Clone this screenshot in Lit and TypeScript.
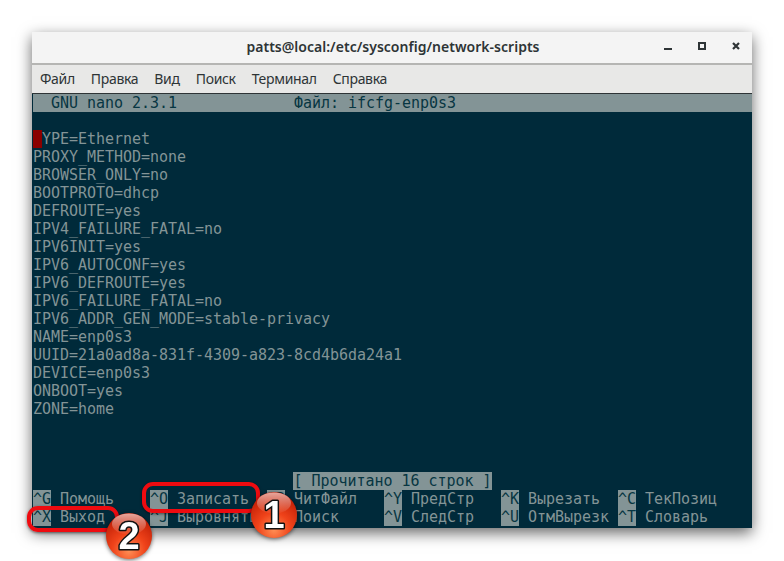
import { LitElement, html, css, svg } from "lit";
import { customElement } from "lit/decorators.js";

const LINES = [
  "PROXY_METHOD=none",
  "BROWSER_ONLY=no",
  "BOOTPROTO=dhcp",
  "DEFROUTE=yes",
  "IPV4_FAILURE_FATAL=no",
  "IPV6INIT=yes",
  "IPV6_AUTOCONF=yes",
  "IPV6_DEFROUTE=yes",
  "IPV6_FAILURE_FATAL=no",
  "IPV6_ADDR_GEN_MODE=stable-privacy",
  "NAME=enp0s3",
  "UUID=21a0ad8a-831f-4309-a823-8cd4b6da24a1",
  "DEVICE=enp0s3",
  "ONBOOT=yes",
  "ZONE=home",
];

const ROW1 = [["^G", "Помощь"], ["^O", "Записать"], ["^R", "ЧитФайл"], ["^Y", "ПредСтр"], ["^K", "Вырезать"], ["^C", "ТекПозиц"]];
const ROW2 = [["^X", "Выход"], ["^J", "Выровнять"], ["^W", "Поиск"], ["^V", "СледСтр"], ["^U", "ОтмВырезк"], ["^T", "Словарь"]];

function badge(id: string, left: number, top: number, digit: string) {
  return html`<svg class="badge" style="left:${left}px;top:${top}px" width="50" height="50" viewBox="0 0 50 50">
    <defs>
      <radialGradient id=${id} cx="50%" cy="82%" r="72%">
        <stop offset="0" stop-color="#ff8f55"></stop>
        <stop offset="0.5" stop-color="#f0431a"></stop>
        <stop offset="1" stop-color="#c42208"></stop>
      </radialGradient>
      <linearGradient id="${id}g" x1="0" y1="0" x2="0" y2="1">
        <stop offset="0" stop-color="#fff" stop-opacity=".6"></stop>
        <stop offset="1" stop-color="#fff" stop-opacity=".03"></stop>
      </linearGradient>
    </defs>
    <circle cx="25" cy="26" r="23" fill=${`url(#${id})`}></circle>
    <ellipse cx="25" cy="14" rx="17" ry="10.5" fill=${`url(#${id}g)`}></ellipse>
    <text x="25" y="38.5" class="digit">${digit}</text>
  </svg>`;
}

@customElement("app-root")
export class AppRoot extends LitElement {
  static styles = css`
    :host { display: block; height: 561px; background: #fff; overflow: hidden; position: relative; }
    .page { padding: 32px 32px 0; }
    .win { width: 720px; height: 496px; display: flex; flex-direction: column; box-shadow: 0 5px 14px rgba(0,0,0,.6); }
    .title { height: 29px; padding: 0 0 2px 2px; background: #f4f4f4; border-bottom: 2px solid #b5b5b3; display: flex; align-items: center; justify-content: center; position: relative;
      font: 600 14px "Noto Sans", "Open Sans", sans-serif; letter-spacing: 0.02px; color: #2e3436; }
    .ctrls { position: absolute; right: 0; top: 0; }
    .ctrls svg { display: block; }
    .menu { height: 26px; padding: 0 0 2px 8px; background: #e8e8e7; border-bottom: 1px solid #2e3436; display: flex; align-items: center; gap: 16px;
      font: 14px "Noto Sans", "Open Sans", sans-serif; letter-spacing: -0.32px; color: #2e3436; }
    .term { flex: 1; background: #002a3a; color: #839496; font: 15px/18px "DejaVu Sans Mono", monospace; letter-spacing: -0.03px; padding-left: 1px; display: flex; flex-direction: column; white-space: pre; }
    .term > div { height: 18px; }
    .bar { background: #839496; color: #073642; }
    .cur { display: inline-block; height: 18px; background: #8b0000; color: #8b0000; }
    .grow { flex: 1; }
    .status { text-align: center; }
    .inv { display: inline-block; height: 18px; background: #839496; color: #073642; }
    .keys { display: grid; grid-template-columns: repeat(6, 117px); }
    .ring { position: absolute; border: 4px solid #ee0b10; border-radius: 11px; box-shadow: 0 1px 3px rgba(0,0,0,.5); box-sizing: border-box; }
    .ring.a { left: 142px; top: 482px; width: 118px; height: 31px; }
    .ring.b { left: 27px; top: 506px; width: 92px; height: 26px; }
    .badge { position: absolute; overflow: visible; filter: drop-shadow(0 1px 2px rgba(0,0,0,.6)); }
    .digit { font: 700 38px "Liberation Sans", sans-serif; fill: #fff; stroke: #111; stroke-width: 3px; paint-order: stroke; stroke-linejoin: round; text-anchor: middle; }
  `;

  render() {
    return html`
      <div class="page">
        <div class="win">
          <div class="title">patts@local:/etc/sysconfig/network-scripts
            <div class="ctrls">
              <svg width="130" height="31" viewBox="0 0 130 31" fill="none" stroke="#2e3436" stroke-width="2">
                ${svg`<path d="M42 17h8"></path>
                <rect x="77" y="11" width="6" height="6"></rect>
                <path d="M111 11l6 6m0-6l-6 6" stroke-width="2.2"></path>`}
              </svg>
            </div>
          </div>
          <div class="menu">
            <span>Файл</span><span>Правка</span><span>Вид</span><span>Поиск</span><span>Терминал</span><span>Справка</span>
          </div>
          <div class="term">
            <div class="bar">  GNU nano 2.3.1             Файл: ifcfg-enp0s3</div>
            <div></div>
            <div><span class="cur">T</span>YPE=Ethernet</div>
            ${LINES.map((l) => html`<div>${l}</div>`)}
            <div class="grow"></div>
            <div class="status"><span class="inv">[ Прочитано 16 строк ]</span></div>
            ${[ROW1, ROW2].map((r) => html`<div class="keys">${r.map(([k, t]) => html`<span><span class="inv">${k}</span> ${t}</span>`)}</div>`)}
            <div style="height:2px"></div>
          </div>
        </div>
      </div>
      <div class="ring a"></div>
      <div class="ring b"></div>
      ${badge("b1", 249, 489, "1")}
      ${badge("b2", 104, 510, "2")}
    `;
  }
}
